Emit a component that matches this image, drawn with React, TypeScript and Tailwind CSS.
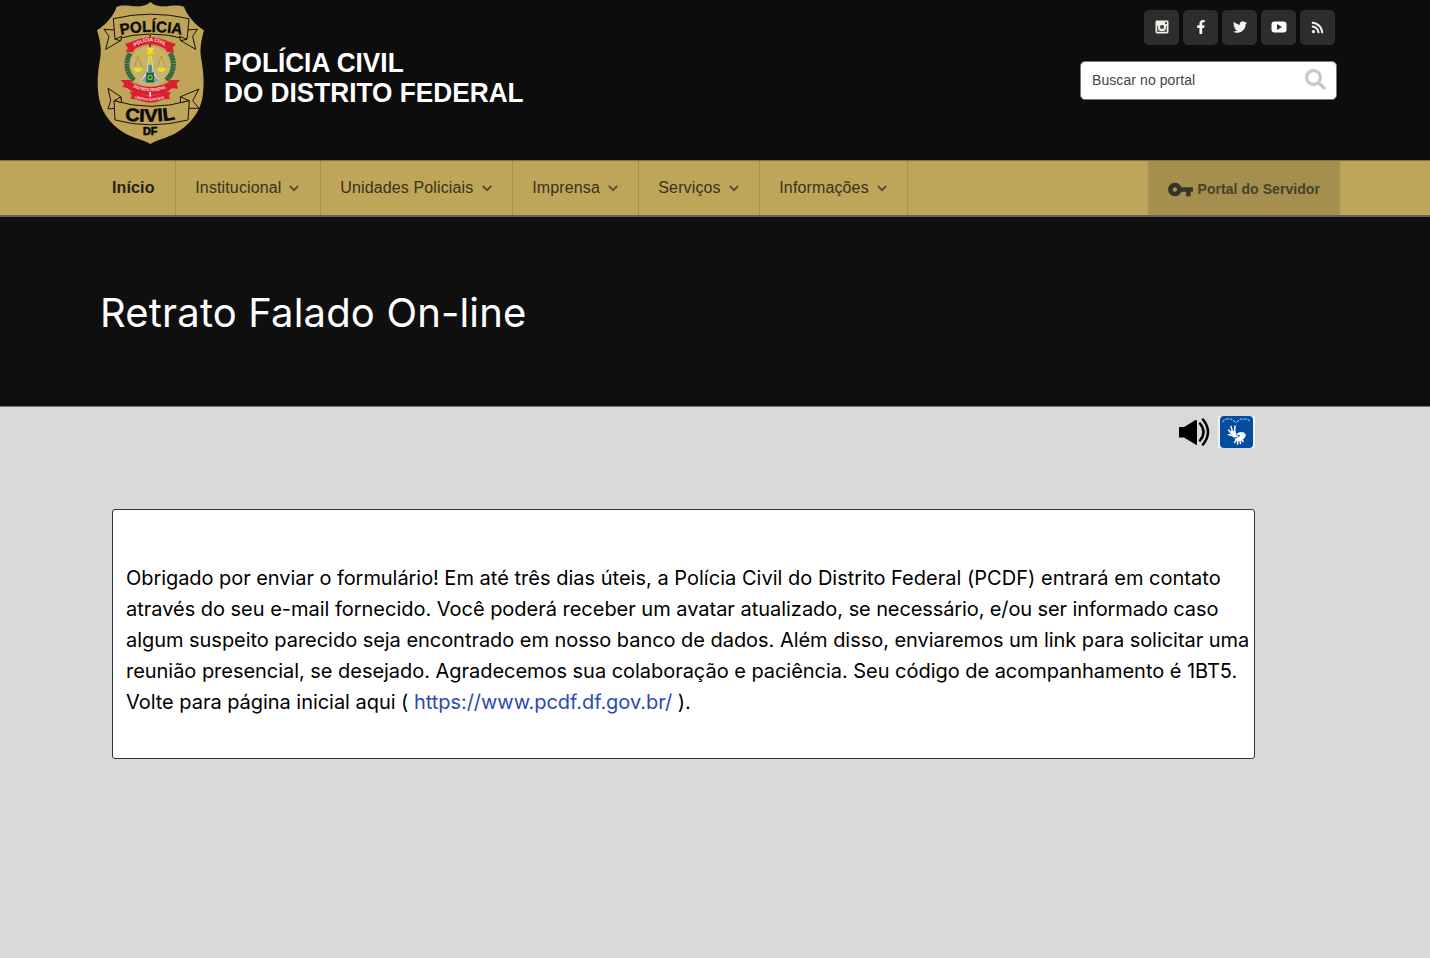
import type { ReactNode } from "react";
import { FaFacebookF, FaTwitter, FaRss, FaSearch } from "react-icons/fa";
import { MdVpnKey } from "react-icons/md";

function Badge() {
  return (
    <svg viewBox="0 0 360 450" className="h-[150px] w-[120px] shrink-0" aria-label="Polícia Civil DF">
      <path
        d="M181 6C170 16 156 20 140 19C118 18 98 13 80 20C72 45 48 74 21 91C30 120 35 145 31 172C24 212 20 246 26 288C34 348 80 394 134 413C154 419 168 424 181 432C194 424 207 419 227 413C281 394 330 348 338 288C344 246 340 212 333 172C329 145 334 120 342 91C315 74 291 45 282 20C264 13 244 18 222 19C206 20 192 16 181 6Z"
        fill="#bfa45a"
      />
      <g fill="#bfa45a" stroke="#161409" strokeWidth="3" strokeLinejoin="round">
        <path d="M75 90L42 88L57 109L47 148L92 122L93 111" />
        <path d="M289 90L322 88L308 109L317 148L272 122L271 111" />
        <path d="M70 56Q181 29 297 56L291 118Q181 86 75 118Z" />
        <path d="M75 118L95 109L92 122Z" />
        <path d="M291 118L269 109L272 122Z" />
        <path d="M75 300L95 304L92 290L54 265L62 302L54 327L75 325" />
        <path d="M295 300L271 304L272 290L327 267L308 302L327 325L295 325" />
        <path d="M72 302Q181 336 298 302L294 360Q181 389 75 360Z" />
        <path d="M75 302L92 290L95 308Z" />
        <path d="M296 302L272 290L271 308Z" />
      </g>
      <path id="badge-arc-top" d="M92 105Q184 86 282 106" fill="none" />
      <path id="badge-arc-bottom" d="M104 360Q181 371 264 357" fill="none" />
      <g fill="#090a08" fontFamily="Liberation Sans, Arial, sans-serif" fontWeight="bold">
        <text fontSize="47" stroke="#090a08" strokeWidth="1">
          <textPath href="#badge-arc-top" textLength="184" lengthAdjust="spacingAndGlyphs">POLÍCIA</textPath>
        </text>
        <text fontSize="54" stroke="#090a08" strokeWidth="1.6">
          <textPath href="#badge-arc-bottom" textLength="153" lengthAdjust="spacingAndGlyphs">CIVIL</textPath>
        </text>
        <text x="159" y="406" fontSize="31" textLength="43" lengthAdjust="spacingAndGlyphs" stroke="#090a08" strokeWidth="2">DF</text>
      </g>
      <ellipse cx="180" cy="200" rx="62" ry="62" fill="#c9b16e" />
      <g fill="none" stroke="#2c663d" strokeWidth="15" strokeDasharray="7 1">
        <path d="M120 160C106 186 107 216 132 240" />
        <path d="M241 160C255 186 254 216 229 240" />
      </g>
      <path d="M178 104H183V145H178Z" fill="#7c1f24" />
      <path d="M175 168H186L191 215L209 244Q180 252 151 244L170 215Z" fill="#f5f5ec" stroke="#8c947f" strokeWidth="1" />
      <path d="M171 221L154 243Q162 246 171 247Z" fill="#7f9bb5" />
      <path d="M190 221L207 243Q199 246 190 247Z" fill="#7f9bb5" />
      <path d="M169 217H192V248H169Z" fill="#126638" />
      <path d="M175 226H186V238H175Z" fill="none" stroke="#d8cf3d" strokeWidth="2.5" />
      <path d="M170 145Q181 138 192 145L187 153L193 161H169L175 153Z" fill="#f0e21b" />
      <path d="M141 169Q160 160 179 166Q200 160 221 169" fill="none" stroke="#d3bd17" strokeWidth="5" />
      <path d="M144 168L132 204M144 168L157 204M214 168L201 204M214 168L227 204" stroke="#a58c25" strokeWidth="2" />
      <path d="M129 203H158Q155 216 144 216Q133 216 129 203Z" fill="#e8df22" />
      <path d="M200 203H229Q225 216 214 216Q203 216 200 203Z" fill="#e8df22" />
      <path d="M177 163H184L187 194H174Z" fill="#d8cb3d" />
      <path d="M175 194H186L188 217H173Z" fill="#5d8798" />
      <g fill="#d91f30">
        <path d="M105 132L123 126Q180 98 239 126L258 132L248 143L252 158L232 156L226 147Q181 119 134 147L129 157L106 155L114 145Z" />
        <path d="M92 240L121 240L127 248Q180 272 234 248L240 240L270 240L260 251L264 266L246 265L236 273Q180 299 124 273L113 265L97 260L103 252Z" />
        <path d="M119 275L136 276Q181 298 226 276L243 277L237 287L240 297L221 298Q181 318 140 298L121 296L126 287Z" />
      </g>
      <path d="M178 276H183V290H178Z" fill="#f5eeee" />
      <path id="badge-ribbon-1" d="M134 140Q181 108 229 140" fill="none" />
      <path id="badge-ribbon-2" d="M130 262Q181 285 235 262" fill="none" />
      <path id="badge-ribbon-3" d="M134 293Q181 311 231 292" fill="none" />
      <g fill="#ffe7e7" fontFamily="Liberation Sans, Arial, sans-serif" fontWeight="bold">
        <text fontSize="15"><textPath href="#badge-ribbon-1" textLength="98" lengthAdjust="spacingAndGlyphs">POLÍCIA CIVIL</textPath></text>
        <text fontSize="13"><textPath href="#badge-ribbon-2" textLength="102" lengthAdjust="spacingAndGlyphs">DISTRITO FEDERAL</textPath></text>
        <text fontSize="10"><textPath href="#badge-ribbon-3" textLength="92" lengthAdjust="spacingAndGlyphs">LIBERTAS QUAE SERA</textPath></text>
      </g>
    </svg>
  );
}

function SocialButton({ label, children }: { label: string; children: ReactNode }) {
  return (
    <button aria-label={label} className="flex h-[35px] w-[35px] items-center justify-center rounded-[5px] bg-[#2d2d2d] text-[#f5f5f5]">
      {children}
    </button>
  );
}

function Chevron() {
  return (
    <svg viewBox="0 0 10 7" className="mt-px ml-[7.5px] h-[7px] w-[10px]" fill="none" stroke="#5a502d" strokeWidth="1.9">
      <path d="M.8 1L5 5.1L9.2 1" />
    </svg>
  );
}

const menu = [
  { label: "Institucional", cell: "w-[145px]", text: "w-[86px]" },
  { label: "Unidades Policiais", cell: "w-[192px]", text: "w-[134px]" },
  { label: "Imprensa", cell: "w-[126px]", text: "w-[68px]" },
  { label: "Serviços", cell: "w-[121px]", text: "w-[63px]" },
  { label: "Informações", cell: "w-[148px]", text: "w-[90px]" },
];

export default function App() {
  return (
    <div className="flex h-[958px] w-[1430px] flex-col overflow-hidden bg-[#d9d9d9] font-['Inter',sans-serif]">
      <header className="flex h-[160px] justify-between bg-[#0d0d0d] pr-[93px] pl-[90px]">
        <div className="flex">
          <Badge />
          <h1 className="mt-[48px] ml-[13.5px] font-['Liberation_Sans',sans-serif] text-[28.5px] leading-[29.5px] font-bold whitespace-nowrap text-white">
            <span className="block origin-left scale-x-[.92]">POLÍCIA CIVIL</span>
            <span className="block origin-left scale-x-[.92]">DO DISTRITO FEDERAL</span>
          </h1>
        </div>
        <div className="flex w-[257px] shrink-0 flex-col pt-[10px]">
          <div className="flex justify-end gap-[4px] pr-[2px]">
            <SocialButton label="Instagram">
              <svg viewBox="0 0 14 14" className="mb-px h-[14px] w-[14px]">
                <rect x=".5" y=".5" width="13" height="13" rx="1.4" fill="#f1eeea" />
                <path d="M2 5.8H3.4A3.9 3.9 0 1 0 10.6 5.8H12V12H2Z" fill="#6b6866" />
                <circle cx="7" cy="7" r="3.8" fill="#f1eeea" />
                <circle cx="7" cy="7" r="2.1" fill="#45413e" />
                <rect x="10" y="2" width="2" height="2" fill="#565350" />
              </svg>
            </SocialButton>
            <SocialButton label="Facebook"><FaFacebookF size={14} className="mb-px" /></SocialButton>
            <SocialButton label="Twitter"><FaTwitter size={14} className="mb-px" /></SocialButton>
            <SocialButton label="YouTube">
              <svg viewBox="0 0 16 12" className="mb-px h-[12px] w-[16px]">
                <rect x=".5" y=".6" width="15" height="11" rx="3" fill="white" />
                <path d="M6 3L11 6L6 9Z" fill="#2d2d2d" />
              </svg>
            </SocialButton>
            <SocialButton label="RSS"><FaRss size={13} className="mb-px" /></SocialButton>
          </div>
          <label className="mt-[16px] flex h-[39px] items-center justify-between rounded-[5px] border border-[#777] bg-white pr-[10px] pl-[11px]">
            <span className="font-['Liberation_Sans',sans-serif] text-[14px] tracking-[.08px] text-[#444]">Buscar no portal</span>
            <FaSearch size={21} className="mb-[2px] text-[#c8c8c8]" />
          </label>
        </div>
      </header>

      <nav className="flex h-[57px] shrink-0 border-t border-b-2 border-t-[#826f3e] border-b-[#62615a] bg-[#bfa55a] font-['Liberation_Sans',sans-serif] text-[16px] tracking-[.13px] text-[#393219]">
        <a className="flex w-[176px] items-center border-r border-[#a8914d] pl-[112px] font-bold text-[#272315]">Início</a>
        {menu.map((item) => (
          <a key={item.label} className={`flex items-center border-r border-[#a8914d] pl-[19.3px] whitespace-nowrap ${item.cell}`}>
            <span className={item.text}>{item.label}</span>
            <Chevron />
          </a>
        ))}
        <a className="ml-auto mr-[90px] flex w-[192px] items-center bg-[#a48f4e] pt-[2px] pl-[19px] text-[14px] font-bold tracking-[.06px] whitespace-nowrap text-[#454329]">
          <MdVpnKey size={27} className="mr-[3.5px] text-[#34352a]" />
          Portal do Servidor
        </a>
      </nav>

      <section className="h-[190px] shrink-0 border-b border-[#777] bg-[#0f0f0f] pt-[71px] pl-[100px]">
        <h2 className="text-[40px] leading-[50px] font-normal tracking-[.16px] whitespace-nowrap text-white">Retrato Falado On-line</h2>
      </section>

      <main className="pl-[112px]">
        <div className="flex h-[102px] w-[1143px] justify-end pt-[9px]">
          <svg viewBox="0 0 32 32" className="mr-[8px] h-[32px] w-[32px]">
            <path d="M1 11H6L17.5 4Q18.8 3.5 19 5V28Q18.8 29.5 17.5 28.5L6 21.5H1Z" fill="black" />
            <path d="M22 7.5Q29 16 22 24.5M25 3.5Q35 16 25 28.5" fill="none" stroke="black" strokeWidth="2.5" strokeLinecap="round" />
          </svg>
          <svg viewBox="0 0 37 32" className="h-[32px] w-[37px]">
            <path d="M0 0H37V32H0Z" fill="#eef1f3" />
            <rect x="2" width="33" height="32" rx="4" fill="#034da0" />
            <path d="M5 6Q6 3 9 3H13L18 6.5L23 3H28Q31 3 32 6" fill="none" stroke="#b9d2eb" strokeWidth="1" strokeDasharray="3 1" />
            <g fill="none" stroke="white" strokeWidth="1.5" strokeLinecap="round">
              <path d="M14.5 16L13 10.5M16.5 16L17 10M13.5 17.5L10.5 14M14 19.5L10.5 18.5M18.5 24L16.5 26.5M20 24L19.5 28M22 24L22.5 27.5M23.5 23L25 25.5" />
            </g>
            <path d="M13 15L17.5 15L18 18L22 16L26 16.5L28 19L26.5 22L23 25L18.5 25L16.5 23L20 21L15.5 21.5L13.5 19.5Z" fill="white" />
            <path d="M18 19L22 19.5L19.5 21" fill="none" stroke="#034da0" strokeWidth=".8" />
          </svg>
        </div>
        <section className="h-[250px] w-[1143px] rounded-[3px] border border-[#333] bg-white pt-[53px] pl-[13px]">
          <p className="text-[20px] leading-[31px] whitespace-nowrap text-black">
            <span className="tracking-[-.06px]">Obrigado por enviar o formulário! </span><span className="tracking-[.015px]">Em até três dias úteis, a Polícia Civil do Distrito Federal (PCDF) entrará em contato</span><br />
            <span className="tracking-[-.02px]">através do seu e-mail fornecido. Você poderá receber um avatar atualizado, </span><span className="tracking-[-.11px]">se necessário, e/ou ser informado caso</span><br />
            <span className="tracking-[-.04px]">algum suspeito parecido seja encontrado em nosso banco de dados. Além disso, enviaremos um link para solicitar uma</span><br />
            <span className="tracking-[-.037px]">reunião presencial, se desejado. Agradecemos sua colaboração e paciência. Seu código de acompanhamento é 1BT5.</span><br />
            <span className="tracking-[-.04px]">Volte para página inicial aqui ( <a href="https://www.pcdf.df.gov.br/" className="text-[#2949b5]">https://www.pcdf.df.gov.br/</a> ).</span>
          </p>
        </section>
      </main>
    </div>
  );
}
